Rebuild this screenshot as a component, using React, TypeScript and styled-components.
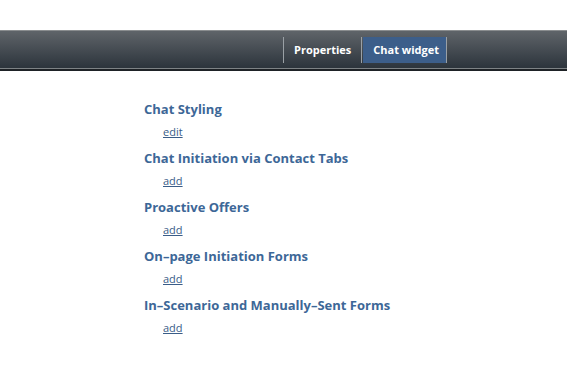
import styled, { createGlobalStyle } from 'styled-components';

const GlobalStyle = createGlobalStyle`
	body {
		margin: 0;
		background: #ffffff;
		font-family: 'Open Sans', 'DejaVu Sans', sans-serif;
	}
`;

const sections = [
	{ title: 'Chat Styling', action: 'edit' },
	{ title: 'Chat Initiation via Contact Tabs', action: 'add' },
	{ title: 'Proactive Offers', action: 'add' },
	{ title: 'On\u2013page Initiation Forms', action: 'add' },
	{ title: 'In\u2013Scenario and Manually\u2013Sent Forms', action: 'add' },
];

export default function App() {
	return (
		<Page>
			<GlobalStyle />
			<TopBar>
				<Tabs>
					<Tab>Properties</Tab>
					<Tab active>Chat widget</Tab>
				</Tabs>
			</TopBar>

			<Content>
				{sections.map((s) => (
					<Section key={s.title}>
						<SectionTitle>{s.title}</SectionTitle>
						<ActionLink href="#">{s.action}</ActionLink>
					</Section>
				))}
			</Content>
		</Page>
	);
}

const Page = styled.div`
	padding-top: 30px;
	width: 567px;
	height: 341px;
	background: #ffffff;
`;

const TopBar = styled.header`
	display: flex;
	align-items: center;
	height: 37px;
	border-top: 1px solid #8a8d8f;
	border-bottom: 1px solid #7d8285;
	box-shadow: 0 2px 0 #1e2226;
	background: linear-gradient(#5f6469, #2c343c);
	padding-left: 283px;
	margin-bottom: 2px;
`;

const Tabs = styled.nav`
	display: flex;
	height: 26px;
	border-left: 1px solid #9aa0a5;
`;

const Tab = styled.div<{ active?: boolean }>`
	display: flex;
	align-items: center;
	padding: ${(p) => (p.active ? '0 7px 0 10px' : '0 10px')};
	font-size: 11px;
	font-weight: 700;
	color: #ffffff;
	border-right: 1px solid #9aa0a5;
	background: ${(p) => (p.active ? '#3c5e8a' : 'transparent')};
	margin-right: ${(p) => (p.active ? '0' : '1px')};
`;

const Content = styled.main`
	padding: 29px 0 0 144px;
`;

const Section = styled.section`
	display: flex;
	flex-direction: column;
	align-items: flex-start;
	height: 49px;
`;

const SectionTitle = styled.h2`
	margin: 0;
	font-size: 13px;
	line-height: 18px;
	font-weight: 700;
	color: #3d6797;
`;

const ActionLink = styled.a`
	margin: 7px 0 0 19px;
	font-size: 11px;
	line-height: 14px;
	color: #3a5d88;
	text-decoration: underline;
`;
